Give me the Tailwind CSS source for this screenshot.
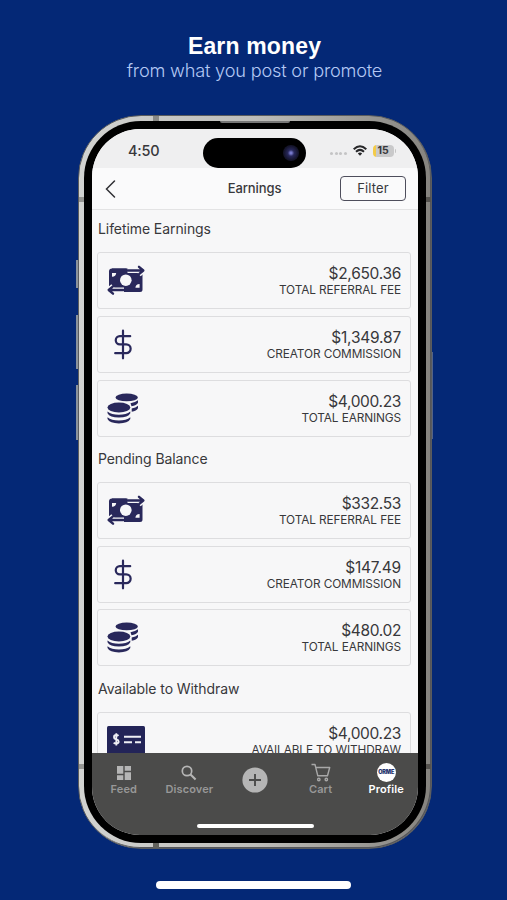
<!DOCTYPE html>
<html lang="en">
<head>
  <meta charset="utf-8">
  <meta name="viewport" content="width=device-width, initial-scale=1">
  <title>Earnings</title>
  <script src="https://cdn.jsdelivr.net/npm/@tailwindcss/browser@4"></script>
</head>
<body class="bg-[#042876] font-['Inter',sans-serif] text-[#38383b] overflow-hidden">

<!-- shared icons -->
<svg class="hidden" xmlns="http://www.w3.org/2000/svg">
  <symbol id="transfer" viewBox="0 0 38 30">
    <path fill="currentColor" d="M5 3H32.500Q35.500 3 35.500 6V24Q35.500 26.500 33 26.500H5Q2 26.500 2 23.500V6Q2 3 5 3Z"/>
    <circle cx="18.800" cy="14.700" r="5.800" fill="#f7f7f8"/>
    <path fill="#f7f7f8" d="M5 7.500h4.200Q9 11 5 11.200ZM32.600 22.300h-4.200Q28.600 18.800 32.600 18.600Z"/>
    <path d="M20.500 5H36M32 1 36.500 5 32 9M17 24.500H2M6 20.500 1.500 24.500 6 28.500" fill="none" stroke="#f7f7f8" stroke-width="5"/>
    <path d="M21 5H36M32 1.300 36.300 5 32 8.700M16.500 24.500H2M6 20.800 1.700 24.500 6 28.200" fill="none" stroke="currentColor" stroke-width="2.400" stroke-linecap="round" stroke-linejoin="round"/>
    <path d="M5 4.200H19.500M33 25.300H18.500" fill="none" stroke="currentColor" stroke-width="2.400"/>
  </symbol>
  <symbol id="dollar" viewBox="0 0 20 30">
    <path d="M10 1.200V28.800M17.200 6.700H6.800a4.050 4.050 0 0 0 0 8.100h6.400a4.450 4.450 0 0 1 0 8.900H2.200" fill="none" stroke="currentColor" stroke-width="2.200" stroke-linecap="round"/>
  </symbol>
  <symbol id="coins" viewBox="0 0 32 31">
    <g fill="currentColor">
      <ellipse cx="19.700" cy="4.400" rx="11.200" ry="3.900"/>
      <path d="M23.500 10.300Q28.500 9.500 31 7.300V9.700Q29.500 12.300 24.500 13.200ZM24.700 15.500Q28.800 14.700 31 12.800V15.200Q29.500 17.800 24.700 18.700Z"/>
      <ellipse cx="11.900" cy="14.500" rx="11.400" ry="4.900"/>
      <path d="M.500 18.500Q4.500 21.700 11.900 21.700T23.300 18.500V20.300Q21 24.600 11.900 24.600T.500 20.300ZM.500 24.300Q4.500 27.500 11.900 27.500T23.300 24.300V26.100Q21 30.400 11.900 30.400T.500 26.100Z"/>
    </g>
  </symbol>
</svg>

<main class="relative w-[507px] h-[900px] flex flex-col items-center">
  <header class="h-[115px] pt-[33px] pl-[2px] text-center whitespace-nowrap">
    <h1 class="font-['Liberation_Sans',sans-serif] font-bold text-[23px] leading-[26px] tracking-[0.150px] text-white">Earn money</h1>
    <p class="font-light text-[18.200px] leading-[22px] tracking-[-0.200px] text-[#b4c8f4]">from what you post or promote</p>
  </header>

  <!-- phone -->
  <div class="relative ml-[3px] w-[354px] h-[734px] rounded-[63px] border border-[#5a5c5e] bg-[linear-gradient(90deg,#d2d3d1,#bdbdba_50%,#85837e)] shadow-[inset_-1px_-1px_0_#55565a] p-[5px]">
    <!-- side buttons -->
    <i class="absolute -left-[3px] top-[144px] w-[2px] h-[28px] bg-[#8a929c]"></i>
    <i class="absolute -left-[3px] top-[199px] w-[2px] h-[54px] bg-[#8a929c]"></i>
    <i class="absolute -left-[3px] top-[269px] w-[2px] h-[55px] bg-[#8a929c]"></i>
    <i class="absolute -right-[2px] top-[236px] w-px h-[87px] bg-[#536389]"></i>
    <!-- antenna bands -->
    <i class="absolute left-[74px] top-0 w-[6px] h-[5px] bg-[#8a8a87]"></i>
    <i class="absolute left-[74px] bottom-0 w-[6px] h-[5px] bg-[#62625d]"></i>
    <i class="absolute left-0 top-[81px] w-[5px] h-[5px] bg-[#959592]"></i>
    <i class="absolute right-0 top-[81px] w-[5px] h-[5px] bg-[#55534f]"></i>
    <i class="absolute left-0 top-[648px] w-[5px] h-[5px] bg-[#959592]"></i>
    <i class="absolute right-0 top-[648px] w-[5px] h-[5px] bg-[#55534f]"></i>

    <div class="w-full h-full rounded-[57px] bg-black p-[8px]">
      <i class="absolute left-[141px] top-[5px] w-[70px] h-[2px] rounded-b-sm bg-[#777]"></i>

      <div class="relative w-[326px] h-[706px] rounded-[48px] overflow-hidden bg-[#f7f7f8] flex flex-col">
        <div class="h-[39px] shrink-0 bg-[#efeff0] flex items-center pt-[4px] pl-[36px]">
          <span class="w-[202px] text-[14.500px] font-medium tracking-[-0.200px]">4:50</span>
          <div class="flex items-center">
            <div class="flex gap-[1.500px] pt-[6px]">
              <i class="size-[3px] rounded-full bg-[#c4c4c5]"></i>
              <i class="size-[3px] rounded-full bg-[#c4c4c5]"></i>
              <i class="size-[3px] rounded-full bg-[#c4c4c5]"></i>
              <i class="size-[3px] rounded-full bg-[#c4c4c5]"></i>
            </div>
            <svg class="w-[14px] h-[11px] ml-[6px]" viewBox="0 0 14 11" fill="none" stroke="#28282a" stroke-width="2">
              <path d="M.700 4.200Q7-1.800 13.300 4.200M3 6.700Q7 3 11 6.700"/>
              <path d="M7 10.800 4.800 8.500Q7 6.700 9.200 8.500Z" fill="#28282a" stroke="none"/>
            </svg>
            <div class="ml-[6px] w-[21px] h-[12px] rounded-[4px] bg-[linear-gradient(90deg,#f3cb49_16%,#c9c9ca_16%)] text-center text-[10.500px] leading-[12px] font-bold">15</div>
            <i class="ml-px w-px h-[4px] rounded-r bg-[#c4c4c5]"></i>
          </div>
        </div>
        <div class="absolute left-[111px] top-[9px] w-[103px] h-[30px] rounded-full bg-black">
          <i class="absolute right-[7px] top-[7px] size-[16px] rounded-full bg-[radial-gradient(circle,#7779cc_8%,#28285b_28%,#16162f_60%,#0b0b13)]"></i>
        </div>

        <nav class="h-[42px] shrink-0 bg-[#fafafb] border-b border-[#e3e3e4] flex items-center justify-between px-[12px]">
          <svg class="w-[14px] h-[20px]" viewBox="0 0 14 20" fill="none" stroke="#303034" stroke-width="1.500" stroke-linecap="round"><path d="M10.500 2 2.500 10l8 8"/></svg>
          <span class="ml-[51px] text-[13px] font-medium tracking-[-0.100px]">Earnings</span>
          <button class="w-[66px] h-[25px] rounded-[4px] border border-[#4e4e5c] text-[13px] tracking-[0.100px]">Filter</button>
        </nav>

        <section class="h-[229.750px] shrink-0 pl-[5px] pr-[7px]">
          <h2 class="h-[42px] pl-px text-[14px] leading-[38px] tracking-[-0.080px]">Lifetime Earnings</h2>
          <div class="flex flex-col gap-[6.750px]">
            <div class="h-[57px] rounded-[3px] border border-[#dddddf] flex items-center justify-between px-[9px]">
              <svg class="w-[38px] h-[31px] text-[#29285b]"><use href="#transfer"/></svg>
              <div class="pt-[2px] text-right">
                <p class="text-[15.500px] leading-[18px] tracking-[-0.300px]">$2,650.36</p>
                <p class="text-[11.800px] leading-[15px] tracking-[-0.100px]">TOTAL REFERRAL FEE</p>
              </div>
            </div>
            <div class="h-[57px] rounded-[3px] border border-[#dddddf] flex items-center justify-between pl-[15px] pr-[9px]">
              <svg class="w-[20px] h-[31px] text-[#29285b]"><use href="#dollar"/></svg>
              <div class="pt-[2px] text-right">
                <p class="text-[15.500px] leading-[18px] tracking-[-0.200px]">$1,349.87</p>
                <p class="text-[11.800px] leading-[15px] tracking-[-0.100px]">CREATOR COMMISSION</p>
              </div>
            </div>
            <div class="h-[57px] rounded-[3px] border border-[#dddddf] flex items-center justify-between px-[9px]">
              <svg class="w-[32px] h-[31px] text-[#29285b]"><use href="#coins"/></svg>
              <div class="pt-[2px] text-right">
                <p class="text-[15.500px] leading-[18px] tracking-[-0.350px]">$4,000.23</p>
                <p class="text-[11.800px] leading-[15px] tracking-[-0.100px]">TOTAL EARNINGS</p>
              </div>
            </div>
          </div>
        </section>

        <section class="h-[229.750px] shrink-0 pl-[5px] pr-[7px]">
          <h2 class="h-[42px] pl-px text-[14px] leading-[38px] tracking-[-0.080px]">Pending Balance</h2>
          <div class="flex flex-col gap-[6.750px]">
            <div class="h-[57px] rounded-[3px] border border-[#dddddf] flex items-center justify-between px-[9px]">
              <svg class="w-[38px] h-[31px] text-[#29285b]"><use href="#transfer"/></svg>
              <div class="pt-[2px] text-right">
                <p class="text-[15.500px] leading-[18px] tracking-[-0.350px]">$332.53</p>
                <p class="text-[11.800px] leading-[15px] tracking-[-0.100px]">TOTAL REFERRAL FEE</p>
              </div>
            </div>
            <div class="h-[57px] rounded-[3px] border border-[#dddddf] flex items-center justify-between pl-[15px] pr-[9px]">
              <svg class="w-[20px] h-[31px] text-[#29285b]"><use href="#dollar"/></svg>
              <div class="pt-[2px] text-right">
                <p class="text-[15.500px] leading-[18px] tracking-[-0.200px]">$147.49</p>
                <p class="text-[11.800px] leading-[15px] tracking-[-0.100px]">CREATOR COMMISSION</p>
              </div>
            </div>
            <div class="h-[57px] rounded-[3px] border border-[#dddddf] flex items-center justify-between px-[9px]">
              <svg class="w-[32px] h-[31px] text-[#29285b]"><use href="#coins"/></svg>
              <div class="pt-[2px] text-right">
                <p class="text-[15.500px] leading-[18px] tracking-[-0.350px]">$480.02</p>
                <p class="text-[11.800px] leading-[15px] tracking-[-0.100px]">TOTAL EARNINGS</p>
              </div>
            </div>
          </div>
        </section>

        <section class="shrink-0 pl-[5px] pr-[7px]">
          <h2 class="h-[42px] pl-px text-[14px] leading-[38px] tracking-[-0.080px]">Available to Withdraw</h2>
          <div class="h-[57px] rounded-[3px] border border-[#dddddf] flex items-center justify-between px-[9px]">
            <svg class="w-[38px] h-[28px]" viewBox="0 0 38 28">
              <rect width="38" height="28" rx="1.500" fill="#232458"/>
              <path d="M11.500 9.800Q10.800 9 9.300 9 7 9 7 10.900T9.300 13.300 11.700 15.500 9.300 17.600Q7.500 17.600 6.700 16.700M9.300 7.200V19.400" fill="none" stroke="#f0f0f5" stroke-width="1.800"/>
              <path d="M17 10.800H34M17 16.300H25M28 16.300H34" stroke="#f0f0f5" stroke-width="1.900"/>
            </svg>
            <div class="pt-[2px] text-right">
              <p class="text-[15.500px] leading-[18px] tracking-[-0.350px]">$4,000.23</p>
              <p class="text-[11.800px] leading-[15px] tracking-[-0.100px]">AVAILABLE TO WITHDRAW</p>
            </div>
          </div>
        </section>

        <!-- tab bar lies over the scrolled list -->
        <div class="absolute inset-x-0 bottom-0 h-[82px] bg-[#4b4b4a] text-[#989898] text-[11px] leading-[13px] font-semibold tracking-[0.100px]">
          <div class="grid grid-cols-5 h-[56px] pt-[10px] text-center -mx-[1px]">
            <div class="flex flex-col items-center">
              <svg class="w-[20px] h-[20px]" viewBox="0 0 20 20" fill="#b5b5b5"><path d="M3 3h6.300v7.800H3zM10.700 3H17v4.700h-6.300zM3 12.200h6.300V17H3zM10.700 9.200H17V17h-6.300z"/></svg>
              Feed
            </div>
            <div class="flex flex-col items-center">
              <svg class="w-[20px] h-[20px]" viewBox="0 0 20 20" fill="none" stroke="#b5b5b5"><circle cx="8" cy="8" r="4.700" stroke-width="1.700"/><path d="M11.500 11.500 16.600 16.600" stroke-width="2.100"/></svg>
              Discover
            </div>
            <div class="flex flex-col items-center">
              <svg class="w-[26px] h-[26px] mt-[3.500px]" viewBox="0 0 26 26"><circle cx="13" cy="13" r="12.600" fill="#b5b5b5"/><path d="M13 7v12M7 13h12" stroke="#4b4b4a" stroke-width="1.900"/></svg>
            </div>
            <div class="flex flex-col items-center">
              <svg class="w-[20px] h-[20px]" viewBox="0 0 20 20" fill="none" stroke="#a8a8a8" stroke-width="1.400" stroke-linejoin="round"><path d="M.500 1.500H4L6.800 12.800H16.500L18.700 4.500H4.700"/><circle cx="7.800" cy="16.500" r="1.200"/><circle cx="15.300" cy="16.500" r="1.200"/></svg>
              Cart
            </div>
            <div class="flex flex-col items-center text-white">
              <span class="size-[19px] mb-px rounded-full bg-white text-[#24346d] text-[5.500px] leading-[19px] font-black tracking-tight">ORME</span>
              Profile
            </div>
          </div>
          <i class="absolute left-[105px] bottom-[7px] w-[117px] h-[4px] rounded-full bg-white"></i>
        </div>
      </div>
    </div>
  </div>

  <div class="mt-[32px] w-[195px] h-[8px] rounded-[4px] bg-white"></div>
</main>
</body>
</html>
